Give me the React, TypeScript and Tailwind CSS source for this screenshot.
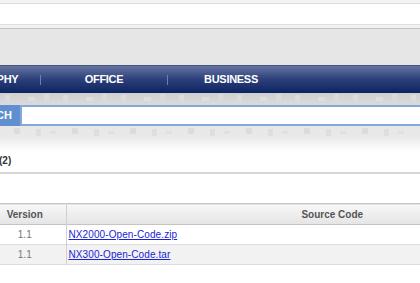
import React from 'react';

const navItems = ['PHOTOGRAPHY', 'OFFICE', 'BUSINESS'];

const files = [
  { version: '1.1', name: 'NX2000-Open-Code.zip' },
  { version: '1.1', name: 'NX300-Open-Code.tar' },
];

const PatternBand: React.FC = () => (
  <svg className="absolute inset-0 h-full w-full" aria-hidden>
    <defs>
      <pattern id="sq" width="58" height="45" patternUnits="userSpaceOnUse">
        <rect x="5" y="2" width="5" height="7" fill="#dcdcdc" />
        <rect x="28" y="4" width="7" height="4" fill="#dedede" />
        <rect x="44" y="1" width="5" height="8" fill="#dadada" />
        <rect x="14" y="35" width="6" height="6" fill="#dcdcdc" />
        <rect x="36" y="36" width="5" height="7" fill="#dedede" />
        <rect x="50" y="38" width="6" height="3" fill="#e0e0e0" />
      </pattern>
    </defs>
    <rect width="100%" height="100%" fill="url(#sq)" />
  </svg>
);

export default function App() {
  return (
    <div className="w-[420px] h-[283px] overflow-hidden bg-white font-['Liberation_Sans',Arial,sans-serif]">
      {/* top strip */}
      <div className="h-[3px] bg-[#f3f3f3]" />
      <div className="h-px bg-[#dcdcdc]" />
      <div className="h-[20px] bg-white" />
      <div className="h-px bg-[#dedede]" />
      <div className="h-[3px] bg-[#f1f1f1]" />
      <div className="h-px bg-[#c2c2c2]" />
      <div className="h-[36px] bg-[#e6e6e6]" />

      {/* nav */}
      <div className="h-[28px] border-t border-[#46557f] bg-gradient-to-b from-[#65739f] via-[#2c3f7a] to-[#0b2461] flex items-center">
        <div className="flex items-center -ml-[86px]">
          {navItems.map((item, i) => (
            <React.Fragment key={item}>
              {i > 0 && <div className="w-px h-[10px] bg-[#6e7fae]" />}
              <div className="w-[126px] text-center text-white text-[11px] font-bold tracking-[-0.3px]">
                {item}
              </div>
            </React.Fragment>
          ))}
        </div>
      </div>

      {/* search band */}
      <div className="relative h-[45px] bg-gradient-to-b from-[#cfcfcf] via-[#e6e6e6] to-[#e9e9e9]">
        <PatternBand />
        <div className="relative pt-[12px] flex">
          <div className="h-[21px] w-[20px] overflow-hidden bg-[#5f8fcf] flex items-center justify-end">
            <span className="text-white text-[11px] font-bold pr-[8px]">SEARCH</span>
          </div>
          <div className="h-[21px] flex-1 bg-white border-y-2 border-l-2 border-[#86a7d9]" />
        </div>
      </div>

      {/* content */}
      <div className="h-[34px] bg-gradient-to-b from-[#ececec] to-white to-40% pt-[15px]">
        <div className="-ml-[1px] text-[10px] font-bold text-[#333]">(2)</div>
      </div>
      <div className="h-[2px] bg-[#d6d6d6]" />
      <div className="h-[29px]" />

      {/* table */}
      <table className="w-[598px] border-collapse text-[10px]">
        <thead>
          <tr className="h-[21px] bg-gradient-to-b from-[#f7f7f7] to-[#e5e5e5] border-t border-b border-[#c4c4c4]">
            <th className="w-[66px] pr-[16px] border-r border-[#d0d0d0] font-bold text-[#555] text-center">Version</th>
            <th className="font-bold text-[#555] text-center">Source Code</th>
          </tr>
        </thead>
        <tbody>
          {files.map((f, i) => (
            <tr key={f.name} className={`h-[20px] border-b border-[#dcdcdc] ${i % 2 ? 'bg-[#f2f2f2]' : 'bg-white'}`}>
              <td className="pr-[16px] border-r border-[#d0d0d0] text-center text-[#777]">{f.version}</td>
              <td className="pl-[2px] text-left">
                <a href="#" className="text-[#1a24d6] underline tracking-[0.1px]">{f.name}</a>
              </td>
            </tr>
          ))}
        </tbody>
      </table>
    </div>
  );
}
